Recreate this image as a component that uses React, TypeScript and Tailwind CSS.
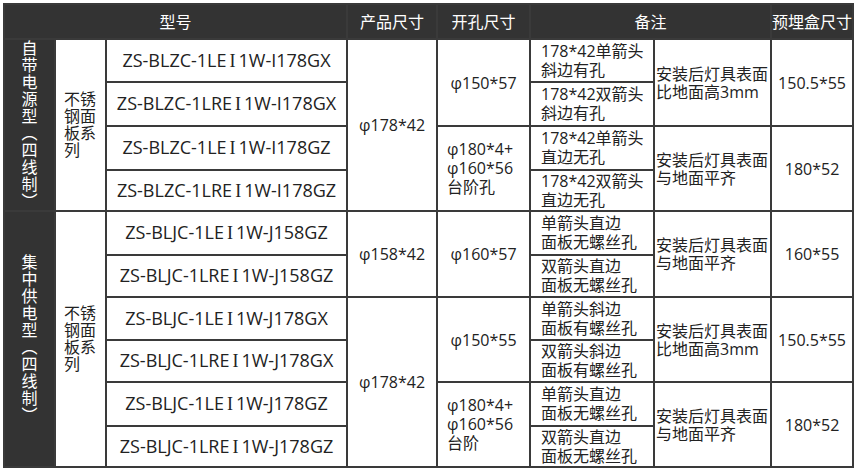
import React from "react";

const font = { fontFamily: '"Open Sans", "Noto Sans CJK SC", sans-serif' };

const B = "border-[2px] border-solid border-[#3a3a3a]";
const td = `${B} p-0 align-middle text-[#222]`;

function Vert({ text }: { text: string }) {
  return (
    <div className="flex justify-center">
      <div
        className="text-white text-[16px] leading-[20px] tracking-[1px] [writing-mode:vertical-rl] [text-orientation:upright]"
        style={{ fontFamily: '"Noto Sans CJK SC", sans-serif' }}
      >
        {text}
      </div>
    </div>
  );
}

function Lines({ lines, cls = "" }: { lines: string[]; cls?: string }) {
  return (
    <div className={cls}>
      {lines.map((l, i) => (
        <div key={i}>{l}</div>
      ))}
    </div>
  );
}

function Model({ a, b }: { a: string; b: string }) {
  return (
    <span className="whitespace-nowrap">
      {a}
      <span className="mx-[3px]" style={{ fontFamily: '"Liberation Serif", serif' }}>I</span>
      {b}
    </span>
  );
}

export default function App() {
  const rowH = [43, 44, 43, 41, 44, 42, 43, 42, 44, 41];
  const model = "text-center text-[18px]";
  const note = "text-left text-[16px] leading-[19px] pl-[10px]";
  const size = "text-center text-[16px]";
  const remark = "text-left text-[16px] leading-[18px] pl-[1px]";
  const hole = "text-[16px] leading-[19px]";
  const steel = (
    <Lines lines={["不锈", "钢面", "板系", "列"]} cls="text-left text-[16px] leading-[17px] pl-[8px]" />
  );
  return (
    <div className="w-[855px] h-[471px] bg-white pt-[3px] pl-[3px]" style={font}>
      <table className="border-collapse table-fixed w-[849px]">
        <colgroup>
          <col className="w-[51px]" />
          <col className="w-[51px]" />
          <col className="w-[241px]" />
          <col className="w-[90px]" />
          <col className="w-[93px]" />
          <col className="w-[124px]" />
          <col className="w-[117px]" />
          <col className="w-[82px]" />
        </colgroup>
        <tbody>
          <tr className="h-[35px] bg-[#333333] text-white text-[16px]">
            <td colSpan={3} className={`${B} text-center`}>型号</td>
            <td className={`${B} text-center`}>产品尺寸</td>
            <td className={`${B} text-center`}>开孔尺寸</td>
            <td colSpan={2} className={`${B} text-center`}>备注</td>
            <td className={`${B} text-center whitespace-nowrap`}>预埋盒尺寸</td>
          </tr>
          {/* Group 1 */}
          <tr style={{ height: rowH[0] }}>
            <td rowSpan={4} className={`${td} bg-[#333333]`}>
              <Vert text="自带电源型（四线制）" />
            </td>
            <td rowSpan={4} className={td}>{steel}</td>
            <td className={`${td} ${model}`}><Model a="ZS-BLZC-1LE" b="1W-I178GX" /></td>
            <td rowSpan={4} className={`${td} ${size}`}>φ178*42</td>
            <td rowSpan={2} className={`${td} ${size}`}>φ150*57</td>
            <td className={td}><Lines lines={["178*42单箭头", "斜边有孔"]} cls={note} /></td>
            <td rowSpan={2} className={td}><Lines lines={["安装后灯具表面", "比地面高3mm"]} cls={remark} /></td>
            <td rowSpan={2} className={`${td} ${size}`}>150.5*55</td>
          </tr>
          <tr style={{ height: rowH[1] }}>
            <td className={`${td} ${model}`}><Model a="ZS-BLZC-1LRE" b="1W-I178GX" /></td>
            <td className={td}><Lines lines={["178*42双箭头", "斜边有孔"]} cls={note} /></td>
          </tr>
          <tr style={{ height: rowH[2] }}>
            <td className={`${td} ${model}`}><Model a="ZS-BLZC-1LE" b="1W-I178GZ" /></td>
            <td rowSpan={2} className={td}><Lines lines={["φ180*4+", "φ160*56", "台阶孔"]} cls={`${hole} pl-[9px]`} /></td>
            <td className={td}><Lines lines={["178*42单箭头", "直边无孔"]} cls={note} /></td>
            <td rowSpan={2} className={td}><Lines lines={["安装后灯具表面", "与地面平齐"]} cls={remark} /></td>
            <td rowSpan={2} className={`${td} ${size}`}>180*52</td>
          </tr>
          <tr style={{ height: rowH[3] }}>
            <td className={`${td} ${model}`}><Model a="ZS-BLZC-1LRE" b="1W-I178GZ" /></td>
            <td className={td}><Lines lines={["178*42双箭头", "直边无孔"]} cls={note} /></td>
          </tr>
          {/* Group 2 */}
          <tr style={{ height: rowH[4] }}>
            <td rowSpan={6} className={`${td} bg-[#333333]`}>
              <Vert text="集中供电型（四线制）" />
            </td>
            <td rowSpan={6} className={td}>{steel}</td>
            <td className={`${td} ${model}`}><Model a="ZS-BLJC-1LE" b="1W-J158GZ" /></td>
            <td rowSpan={2} className={`${td} ${size}`}>φ158*42</td>
            <td rowSpan={2} className={`${td} ${size}`}>φ160*57</td>
            <td className={td}><Lines lines={["单箭头直边", "面板无螺丝孔"]} cls={note} /></td>
            <td rowSpan={2} className={td}><Lines lines={["安装后灯具表面", "与地面平齐"]} cls={remark} /></td>
            <td rowSpan={2} className={`${td} ${size}`}>160*55</td>
          </tr>
          <tr style={{ height: rowH[5] }}>
            <td className={`${td} ${model}`}><Model a="ZS-BLJC-1LRE" b="1W-J158GZ" /></td>
            <td className={td}><Lines lines={["双箭头直边", "面板无螺丝孔"]} cls={note} /></td>
          </tr>
          <tr style={{ height: rowH[6] }}>
            <td className={`${td} ${model}`}><Model a="ZS-BLJC-1LE" b="1W-J178GX" /></td>
            <td rowSpan={4} className={`${td} ${size}`}>φ178*42</td>
            <td rowSpan={2} className={`${td} ${size}`}>φ150*55</td>
            <td className={td}><Lines lines={["单箭头斜边", "面板有螺丝孔"]} cls={note} /></td>
            <td rowSpan={2} className={td}><Lines lines={["安装后灯具表面", "比地面高3mm"]} cls={remark} /></td>
            <td rowSpan={2} className={`${td} ${size}`}>150.5*55</td>
          </tr>
          <tr style={{ height: rowH[7] }}>
            <td className={`${td} ${model}`}><Model a="ZS-BLJC-1LRE" b="1W-J178GX" /></td>
            <td className={td}><Lines lines={["双箭头斜边", "面板有螺丝孔"]} cls={note} /></td>
          </tr>
          <tr style={{ height: rowH[8] }}>
            <td className={`${td} ${model}`}><Model a="ZS-BLJC-1LE" b="1W-J178GZ" /></td>
            <td rowSpan={2} className={td}><Lines lines={["φ180*4+", "φ160*56", "台阶"]} cls={`${hole} pl-[9px]`} /></td>
            <td className={td}><Lines lines={["单箭头直边", "面板无螺丝孔"]} cls={note} /></td>
            <td rowSpan={2} className={td}><Lines lines={["安装后灯具表面", "与地面平齐"]} cls={remark} /></td>
            <td rowSpan={2} className={`${td} ${size}`}>180*52</td>
          </tr>
          <tr style={{ height: rowH[9] }}>
            <td className={`${td} ${model}`}><Model a="ZS-BLJC-1LRE" b="1W-J178GZ" /></td>
            <td className={td}><Lines lines={["双箭头直边", "面板无螺丝孔"]} cls={note} /></td>
          </tr>
        </tbody>
      </table>
    </div>
  );
}
